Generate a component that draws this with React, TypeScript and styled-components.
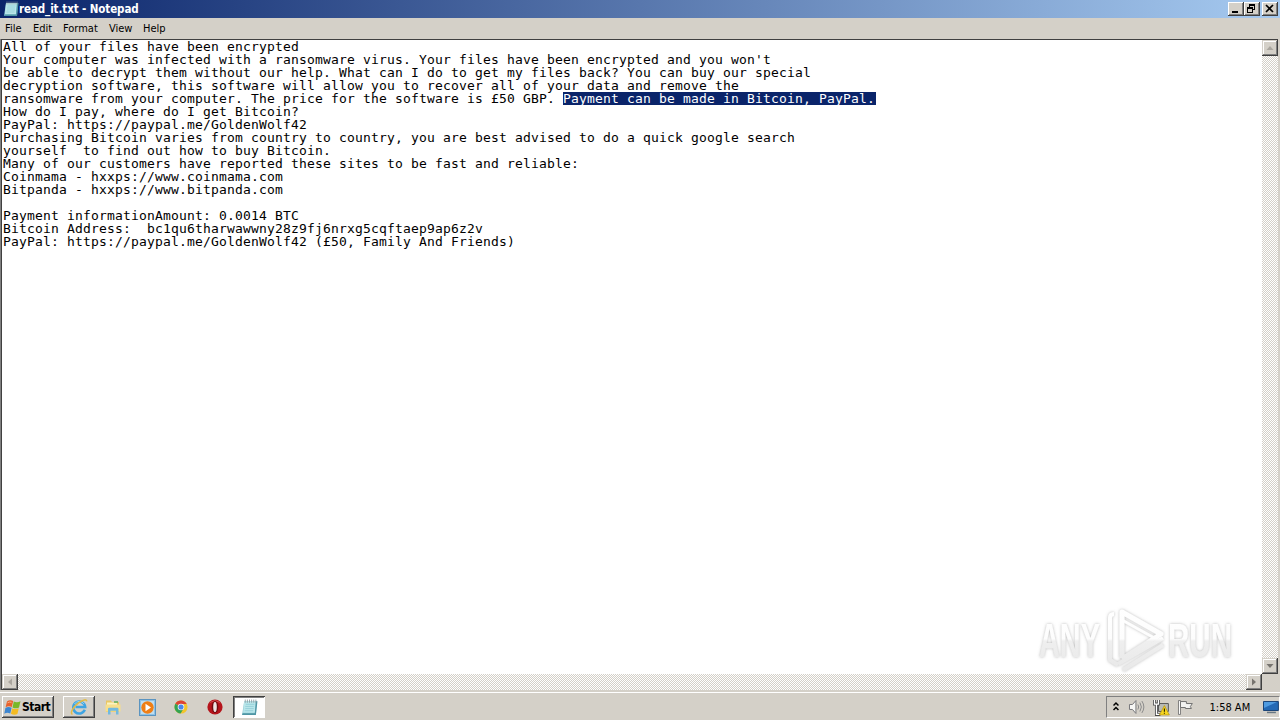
import React from "react";
import styled, { createGlobalStyle, css } from "styled-components";

const GlobalStyle = createGlobalStyle`
  * {
    box-sizing: border-box;
  }
  body {
    margin: 0;
    overflow: hidden;
    background: #d4d0c8;
  }
`;

const note = [
  { text: "All of your files have been encrypted" },
  { text: "Your computer was infected with a ransomware virus. Your files have been encrypted and you won't" },
  { text: "be able to decrypt them without our help. What can I do to get my files back? You can buy our special" },
  { text: "decryption software, this software will allow you to recover all of your data and remove the" },
  {
    text: "ransomware from your computer. The price for the software is £50 GBP. ",
    selected: "Payment can be made in Bitcoin, PayPal.",
  },
  { text: "How do I pay, where do I get Bitcoin?" },
  { text: "PayPal: https://paypal.me/GoldenWolf42" },
  { text: "Purchasing Bitcoin varies from country to country, you are best advised to do a quick google search" },
  { text: "yourself  to find out how to buy Bitcoin." },
  { text: "Many of our customers have reported these sites to be fast and reliable:" },
  { text: "Coinmama - hxxps://www.coinmama.com" },
  { text: "Bitpanda - hxxps://www.bitpanda.com" },
  { text: "" },
  { text: "Payment informationAmount: 0.0014 BTC" },
  { text: "Bitcoin Address:  bc1qu6tharwawwny28z9fj6nrxg5cqftaep9ap6z2v" },
  { text: "PayPal: https://paypal.me/GoldenWolf42 (£50, Family And Friends)" },
];

const menus = [
  { label: "File", width: 28 },
  { label: "Edit", width: 30 },
  { label: "Format", width: 46 },
  { label: "View", width: 34 },
  { label: "Help", width: 34 },
];

const NotepadIcon = ({ size = 16 }: { size?: number }) => (
  <svg width={size} height={size} viewBox="0 0 16 16">
    <path d="M3 2h12l-1 13H1z" fill="#8fc9d3" />
    <path d="M3 2h11l-1 11H2z" fill="#b9e6ea" />
    <path d="M14 2h1.5L14 15H1l.5-1.5H13z" fill="#4f96a5" />
    <path d="M4.5 5h8M4 7h8M4 9h8M3.5 11h8" stroke="#8ccad4" strokeWidth=".7" />
    <path d="M4 .5v3M6 .5v3M8 .5v3M10 .5v3M12 .5v3M14 .5v3" stroke="#8b9a9f" strokeWidth=".8" />
  </svg>
);

const WindowsLogo = () => (
  <svg width="17" height="17" viewBox="0 0 17 17">
    <path d="M3 2.500q3-2.400 6.200-.5L7.800 8q-3-1.800-6.200 .2z" fill="#e8622c" />
    <path d="M9.800 2.500q3 1.600 6.700-.2L15 8.400q-3 1.700-6.500 0z" fill="#79b829" />
    <path d="M1.400 8.900q3-1.900 6.200-.1l-1.300 5.800q-3-1.700-6 .1z" fill="#3d86d0" />
    <path d="M8.300 9.200q3 1.700 6.500 0L13.400 15q-3 1.500-6.500-.2z" fill="#f4bb22" />
    <path d="M3.600 3.800q2-1.200 4-.5" stroke="#f9ad82" fill="none" />
  </svg>
);

const ExplorerIcon = () => (
  <svg width="18" height="18" viewBox="0 0 18 18">
    <path
      d="M14.800 11.800A6 6 0 1 1 15.200 8.900H5.500"
      fill="none"
      stroke="#3fa4e2"
      strokeWidth="2.500"
    />
    <path d="M14 6A5.700 5.700 0 0 0 4.500 6" fill="none" stroke="#8fd6f5" strokeWidth="1" />
    <path
      d="M2.500 16.400C-.5 15.500 3 9 8.500 4.800 13 1.500 17 .8 16.600 3.400"
      fill="none"
      stroke="#e3bb45"
      strokeWidth="1.500"
    />
  </svg>
);

const FolderIcon = () => (
  <svg width="18" height="18" viewBox="0 0 18 18">
    <path d="M2 2.500h5l1 1.500h7v10H2z" fill="#e9c765" />
    <path d="M3 4.500h10v3H3z" fill="#fbf3c0" />
    <path d="M1.500 6.500h15v7h-15z" fill="#f7df8c" />
    <path d="M10 4h4" stroke="#5dae5b" strokeWidth="1.500" />
    <path d="M4 16.500V11q0-1.200 1.200-1.200h8.100q1.200 0 1.200 1.200v5.500h-2.500v-3.700H6.500v3.700z" fill="#72b9df" />
  </svg>
);

const MediaIcon = () => (
  <svg width="17" height="17" viewBox="0 0 17 17">
    <rect x=".5" y=".5" width="16" height="16" fill="#8dc2e6" stroke="#5b94c0" />
    <rect x="2" y="2" width="13" height="13" fill="#c0def0" />
    <circle cx="8.500" cy="8.500" r="6.200" fill="#ef7f16" />
    <path d="M6.500 4.800l5.500 3.700-5.500 3.700z" fill="#fff" />
  </svg>
);

const ChromeIcon = () => (
  <svg width="14" height="14" viewBox="0 0 16 16">
    <circle cx="8" cy="8" r="7.500" fill="#f3c52c" />
    <path d="M8 8L1.500 4.250A7.500 7.500 0 0 1 14.500 4.500H8z" fill="#dd4335" />
    <path d="M1.500 4.250A7.500 7.500 0 0 0 7.500 15.500L11 9.800 8 8z" fill="#34a353" />
    <circle cx="8" cy="8" r="3.800" fill="#f4f4f4" />
    <circle cx="8" cy="8" r="2.900" fill="#4a87ea" />
  </svg>
);

const OperaIcon = () => (
  <svg width="16" height="16" viewBox="0 0 16 16">
    <circle cx="8" cy="8" r="7.600" fill="#b5141b" />
    <path d="M2.500 4.500A6.600 6.600 0 0 1 13.500 4.500Q8 0 2.500 4.500" fill="#e06a68" />
    <ellipse cx="8" cy="8" rx="3.300" ry="6" fill="#6d0b0f" />
    <ellipse cx="8" cy="8" rx="1.800" ry="5.100" fill="#eee4e2" />
  </svg>
);

const TrayIcons = () => (
  <>
    <svg width="8" height="12" viewBox="0 0 8 12">
      <path d="M.5 4.500L3 2 5.500 4.500M.5 9L3 6.500 5.500 9" fill="none" stroke="#000" strokeWidth="1.500" />
    </svg>
    <svg width="18" height="16" viewBox="0 0 18 16">
      <path d="M1.500 5.500h3L8 1.500v13L4.500 10.500h-3z" fill="#f7f7f5" stroke="#77777a" />
      <path d="M10 5.500q1.500 2.500 0 5M12 3.500q3 4.500 0 9M14 2q4 6 0 12" fill="none" stroke="#8b8b8b" />
    </svg>
    <svg width="17" height="17" viewBox="0 0 17 17">
      <path d="M5.500 4.500h10v8h-10z" fill="#b9bbb6" stroke="#575757" />
      <path d="M1.500 1v4h4V1M3.500 5v10.500h4" fill="none" stroke="#4c4c4c" strokeWidth="3" />
      <path d="M1.500 1v4h4V1M3.500 5v10.500h4" fill="none" stroke="#fff" strokeWidth="1.300" />
      <path d="M11.500 6.500l5 9.500h-10z" fill="#f7d61f" stroke="#b59112" strokeWidth=".7" />
      <path d="M11.500 9.500v3.200M11.500 13.700v1.200" stroke="#302900" strokeWidth="1.200" />
    </svg>
    <svg width="17" height="17" viewBox="0 0 17 17">
      <path d="M1.500 1.500h2v14h-2z" fill="#fff" stroke="#666" strokeWidth=".8" />
      <path d="M3.500 2.500h6v2h6l-2 3 1 2h-6v-1h-5z" fill="#f3f3f1" stroke="#707070" />
    </svg>
  </>
);

const DesktopIcon = () => (
  <svg width="16" height="14" viewBox="0 0 16 14">
    <path d="M.5 1.500h15v9H.5z" fill="#2469b5" stroke="#174276" />
    <path d="M1 2h13L1 8z" fill="#4f9be0" />
    <path d="M4 12.500h9" stroke="#687783" strokeWidth="1.500" />
  </svg>
);

const Watermark = () => (
  <WatermarkBox>
    <svg width="224" height="76" viewBox="0 0 224 76">
      <defs>
        <linearGradient id="fade" gradientUnits="userSpaceOnUse" x1="0" y1="4" x2="0" y2="68">
          <stop offset="0" stopColor="#fff" />
          <stop offset=".48" stopColor="#fdfdfd" />
          <stop offset=".52" stopColor="#efefef" />
          <stop offset="1" stopColor="#e8e8e8" />
        </linearGradient>
        <filter id="glow" x="-10%" y="-20%" width="120%" height="140%">
          <feDropShadow dx="0" dy="0" stdDeviation="1.500" floodColor="#888" floodOpacity=".6" />
        </filter>
      </defs>
      <g filter="url(#glow)" fill="url(#fade)">
        <WatermarkText x="9" y="53" textLength="61" lengthAdjust="spacingAndGlyphs">
          ANY
        </WatermarkText>
        <WatermarkText x="138" y="53" textLength="64" lengthAdjust="spacingAndGlyphs">
          RUN
        </WatermarkText>
        <g fill="none" stroke="url(#fade)" strokeWidth="5" strokeLinejoin="round">
          <path d="M92 54V8l39 22-39 25" />
          <path d="M92 16l36 20" strokeWidth="3" />
          <path d="M84 10q-4 0-4 4v42l8 5" strokeWidth="4" />
          <path d="M88 60l45-26M93 66l40-25" strokeWidth="4" />
        </g>
      </g>
    </svg>
  </WatermarkBox>
);

const ScrollArrow = ({ rotate, disabled }: { rotate: number; disabled?: boolean }) => (
  <ScrollButton>
    <svg width="12" height="12" viewBox="0 0 12 12">
      <g transform={`rotate(${rotate} 6 6)`}>
        <path d="M2.500 8h7L6 4z" fill={disabled ? "#aaa69f" : "#77746f"} />
      </g>
    </svg>
  </ScrollButton>
);

const App = () => {
  return (
    <Screen>
      <GlobalStyle />
      <TitleBar>
        <NotepadIcon />
        <Title>read_it.txt - Notepad</Title>
        <WindowButton>
          <svg width="12" height="10" viewBox="0 0 12 10">
            <path d="M2 8h6" stroke="#000" strokeWidth="2" />
          </svg>
        </WindowButton>
        <WindowButton>
          <svg width="12" height="10" viewBox="0 0 12 10" shapeRendering="crispEdges">
            <path d="M3 1h6M3.500 0v3M8.500 0v6M6 5.500h3" stroke="#000" />
            <path d="M3 0h6v2H3zM1 3h6v2H1z" />
            <path d="M1.500 4v4.500h5V4" fill="none" stroke="#000" />
          </svg>
        </WindowButton>
        <WindowButton $gap>
          <svg width="12" height="10" viewBox="0 0 12 10">
            <path d="M2 1l7 7M9 1L2 8" stroke="#000" strokeWidth="1.700" />
          </svg>
        </WindowButton>
      </TitleBar>

      <MenuBar>
        {menus.map((menu) => (
          <MenuItem key={menu.label} $width={menu.width}>
            {menu.label}
          </MenuItem>
        ))}
      </MenuBar>

      <Editor>
        <TextArea>
          {note.map((line, i) => (
            <Line key={i}>
              <span>{line.text}</span>
              {line.selected && <Selection>{line.selected}</Selection>}
            </Line>
          ))}
        </TextArea>
        <ScrollTrack $vertical>
          <ScrollArrow rotate={0} disabled />
          <ScrollArrow rotate={180} />
        </ScrollTrack>
        <ScrollTrack>
          <ScrollArrow rotate={270} disabled />
          <ScrollArrow rotate={90} />
        </ScrollTrack>
        <Corner />
        <Watermark />
      </Editor>

      <TaskBar>
        <StartButton>
          <WindowsLogo />
          Start
        </StartButton>
        <Tasks>
          <Task $state="raised">
            <ExplorerIcon />
          </Task>
          <Task>
            <FolderIcon />
          </Task>
          <Task>
            <MediaIcon />
          </Task>
          <Task>
            <ChromeIcon />
          </Task>
          <Task>
            <OperaIcon />
          </Task>
          <Task $state="pressed">
            <NotepadIcon size={17} />
          </Task>
        </Tasks>
        <Tray>
          <TrayIcons />
          <Clock>1:58 AM</Clock>
          <DesktopIcon />
        </Tray>
      </TaskBar>
    </Screen>
  );
};

const raised = css`
  background: #d4d0c8;
  box-shadow: inset -1px -1px #404040, inset 1px 1px #fff, inset -2px -2px #808080;
`;

const uiFont = css`
  font-family: "DejaVu Sans Condensed", "DejaVu Sans", sans-serif;
  font-stretch: condensed;
  font-size: 11px;
`;

const Screen = styled.div`
  width: 1280px;
  height: 720px;
  display: flex;
  flex-direction: column;
  background: #d4d0c8;
  overflow: hidden;
`;

const TitleBar = styled.div`
  height: 18px;
  display: flex;
  align-items: center;
  padding: 0 2px 0 3px;
  background: linear-gradient(to right, #0a246a, #a6caf0);
`;

const Title = styled.div`
  ${uiFont}
  flex: 1;
  color: #fff;
  font-size: 11.5px;
  font-weight: bold;
  letter-spacing: -0.1px;
`;

const WindowButton = styled.div<{ $gap?: boolean }>`
  ${raised}
  width: 16px;
  height: 14px;
  margin-left: ${(props) => (props.$gap ? "2px" : "0")};
  display: flex;
  justify-content: center;
  align-items: center;
`;

const MenuBar = styled.div`
  height: 21px;
  display: flex;
  align-items: center;
  padding: 0 0 1px 5px;
`;

const MenuItem = styled.div<{ $width: number }>`
  ${uiFont}
  width: ${(props) => props.$width}px;
  color: #000;
`;

const Editor = styled.div`
  position: relative;
  height: 651px;
  display: grid;
  grid-template-columns: 1fr 16px;
  grid-template-rows: 1fr 16px;
  border-left: 1px solid #808080;
  border-right: 2px solid #d4d0c8;
  box-shadow: inset 1px 1px #404040;
  padding: 1px 0 0 1px;
`;

const TextArea = styled.div`
  background: #fff;
  padding: 0 0 0 1px;
  font-family: "DejaVu Sans Mono", monospace;
  font-size: 13px;
  line-height: 13px;
  letter-spacing: 0.174px;
  white-space: pre;
  color: #000;
`;

const Line = styled.div`
  display: flex;
  height: 13px;
`;

const Selection = styled.span`
  height: 13px;
  padding-right: 1px;
  background: #0a246a;
  color: #fff;
`;

const ScrollTrack = styled.div<{ $vertical?: boolean }>`
  display: flex;
  flex-direction: ${(props) => (props.$vertical ? "column" : "row")};
  justify-content: space-between;
  background: repeating-conic-gradient(#d4d0c8 0 25%, #fff 0 50%) 0 0 / 2px 2px;
`;

const ScrollButton = styled.div`
  width: 16px;
  height: 16px;
  display: flex;
  align-items: center;
  justify-content: center;
  background: #d4d0c8;
  box-shadow: inset -1px -1px #404040, inset 1px 1px #d4d0c8, inset -2px -2px #808080,
    inset 2px 2px #fff;
`;

const Corner = styled.div`
  background: #d4d0c8;
`;

const WatermarkBox = styled.div`
  position: absolute;
  right: 24px;
  bottom: 16px;
  height: 70px;
`;

const WatermarkText = styled.text`
  font-family: "Liberation Sans Narrow", "Liberation Sans", sans-serif;
  font-weight: bold;
  font-size: 48px;
`;

const TaskBar = styled.div`
  flex: 1;
  margin-top: 2px;
  display: flex;
  align-items: flex-start;
  padding: 3px 0 0 2px;
  border-top: 1px solid #fff;
`;

const StartButton = styled.div`
  ${uiFont}
  ${raised}
  width: 52px;
  height: 22px;
  padding: 0 0 0 2px;
  display: flex;
  align-items: center;
  gap: 1px;
  font-size: 12px;
  font-weight: bold;
  letter-spacing: -0.5px;
`;

const Tasks = styled.div`
  flex: 1;
  display: flex;
  margin-left: 9px;
  gap: 2px;
`;

const Task = styled.div<{ $state?: "raised" | "pressed" }>`
  width: 32px;
  height: 22px;
  display: flex;
  align-items: center;
  justify-content: center;
  ${(props) => props.$state === "raised" && raised}
  ${(props) =>
    props.$state === "pressed" &&
    css`
      background: #fff;
      box-shadow: inset 1px 1px #404040, inset -1px -1px #fff, inset 2px 2px #808080;
    `}
`;

const Tray = styled.div`
  width: 174px;
  height: 22px;
  display: flex;
  align-items: center;
  gap: 7px;
  padding-left: 6px;
  border: 1px solid #808080;
  border-right-color: #fff;
  border-bottom-color: #fff;
`;

const Clock = styled.div`
  ${uiFont}
  width: 44px;
  margin: 0 3px 0 9px;
  white-space: nowrap;
`;

export default App;
